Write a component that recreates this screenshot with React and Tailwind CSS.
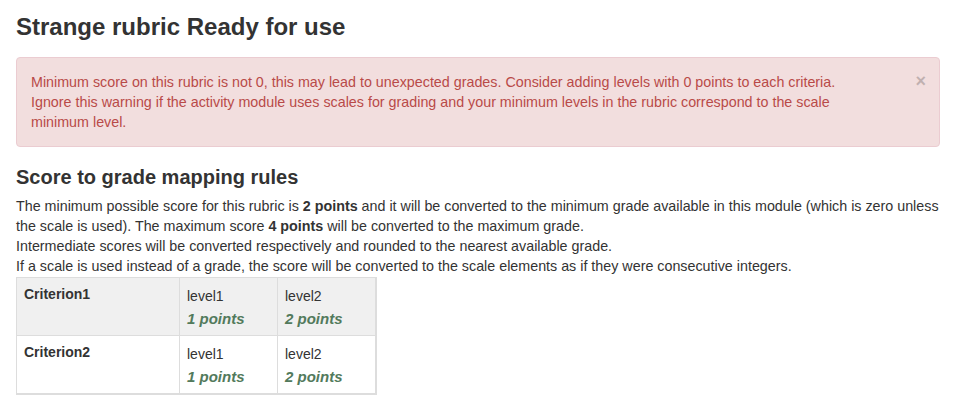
const rows = [
  { name: "Criterion1", striped: true },
  { name: "Criterion2", striped: false },
]

const levels = [
  { label: "level1", points: "1 points" },
  { label: "level2", points: "2 points" },
]

const App = () => {
  return (
    <div className="px-4 pt-[12px] text-[14px] leading-[20px] text-[#333] font-['Liberation_Sans',Arial,sans-serif] bg-white min-h-[404px]">
      <h2 className="text-[24px] leading-[30px] font-bold text-[#333]">Strange rubric Ready for use</h2>

      <div className="relative mt-[15px] rounded-[4px] border border-[#ebccd1] bg-[#f2dede] pl-[14px] pr-[35px] pt-[14px] pb-[14px] text-[14.3px] text-[#b94a48]">
        <button className="absolute right-[13px] top-[13px] text-[18px] leading-[20px] font-bold text-black opacity-20">
          ×
        </button>
        <div className="whitespace-nowrap">Minimum score on this rubric is not 0, this may lead to unexpected grades. Consider adding levels with 0 points to each criteria.</div>
        <div className="whitespace-nowrap">Ignore this warning if the activity module uses scales for grading and your minimum levels in the rubric correspond to the scale</div>
        <div>minimum level.</div>
      </div>

      <h3 className="mt-[18px] text-[20px] leading-[24px] font-bold text-[#333]">Score to grade mapping rules</h3>

      <div className="mt-[7px] text-[14.3px]">
        <div className="whitespace-nowrap">
          The minimum possible score for this rubric is <b>2 points</b> and it will be converted to the minimum grade available in this module (which is zero unless
        </div>
        <div className="whitespace-nowrap">
          the scale is used). The maximum score <b>4 points</b> will be converted to the maximum grade.
        </div>
        <div className="whitespace-nowrap">Intermediate scores will be converted respectively and rounded to the nearest available grade.</div>
        <div className="whitespace-nowrap">If a scale is used instead of a grade, the score will be converted to the scale elements as if they were consecutive integers.</div>
      </div>

      <table className="mt-[1px] border-collapse border-r-2 border-b-2 border-[#ddd]">
        <tbody>
          {rows.map((row) => (
            <tr key={row.name} className={row.striped ? "bg-[#f0f0f0]" : "bg-white"}>
              <td className="w-[163px] h-[58px] align-top border border-[#ddd] px-[7px] pt-[6px] font-bold">
                {row.name}
              </td>
              {levels.map((lv) => (
                <td key={lv.label} className="w-[98px] align-top border border-[#ddd] px-[7px] pt-[8px]">
                  <div>{lv.label}</div>
                  <div className="mt-[3px] text-[15px] italic font-bold text-[#527a5c]">{lv.points}</div>
                </td>
              ))}
            </tr>
          ))}
        </tbody>
      </table>
    </div>
  )
}

export default App
